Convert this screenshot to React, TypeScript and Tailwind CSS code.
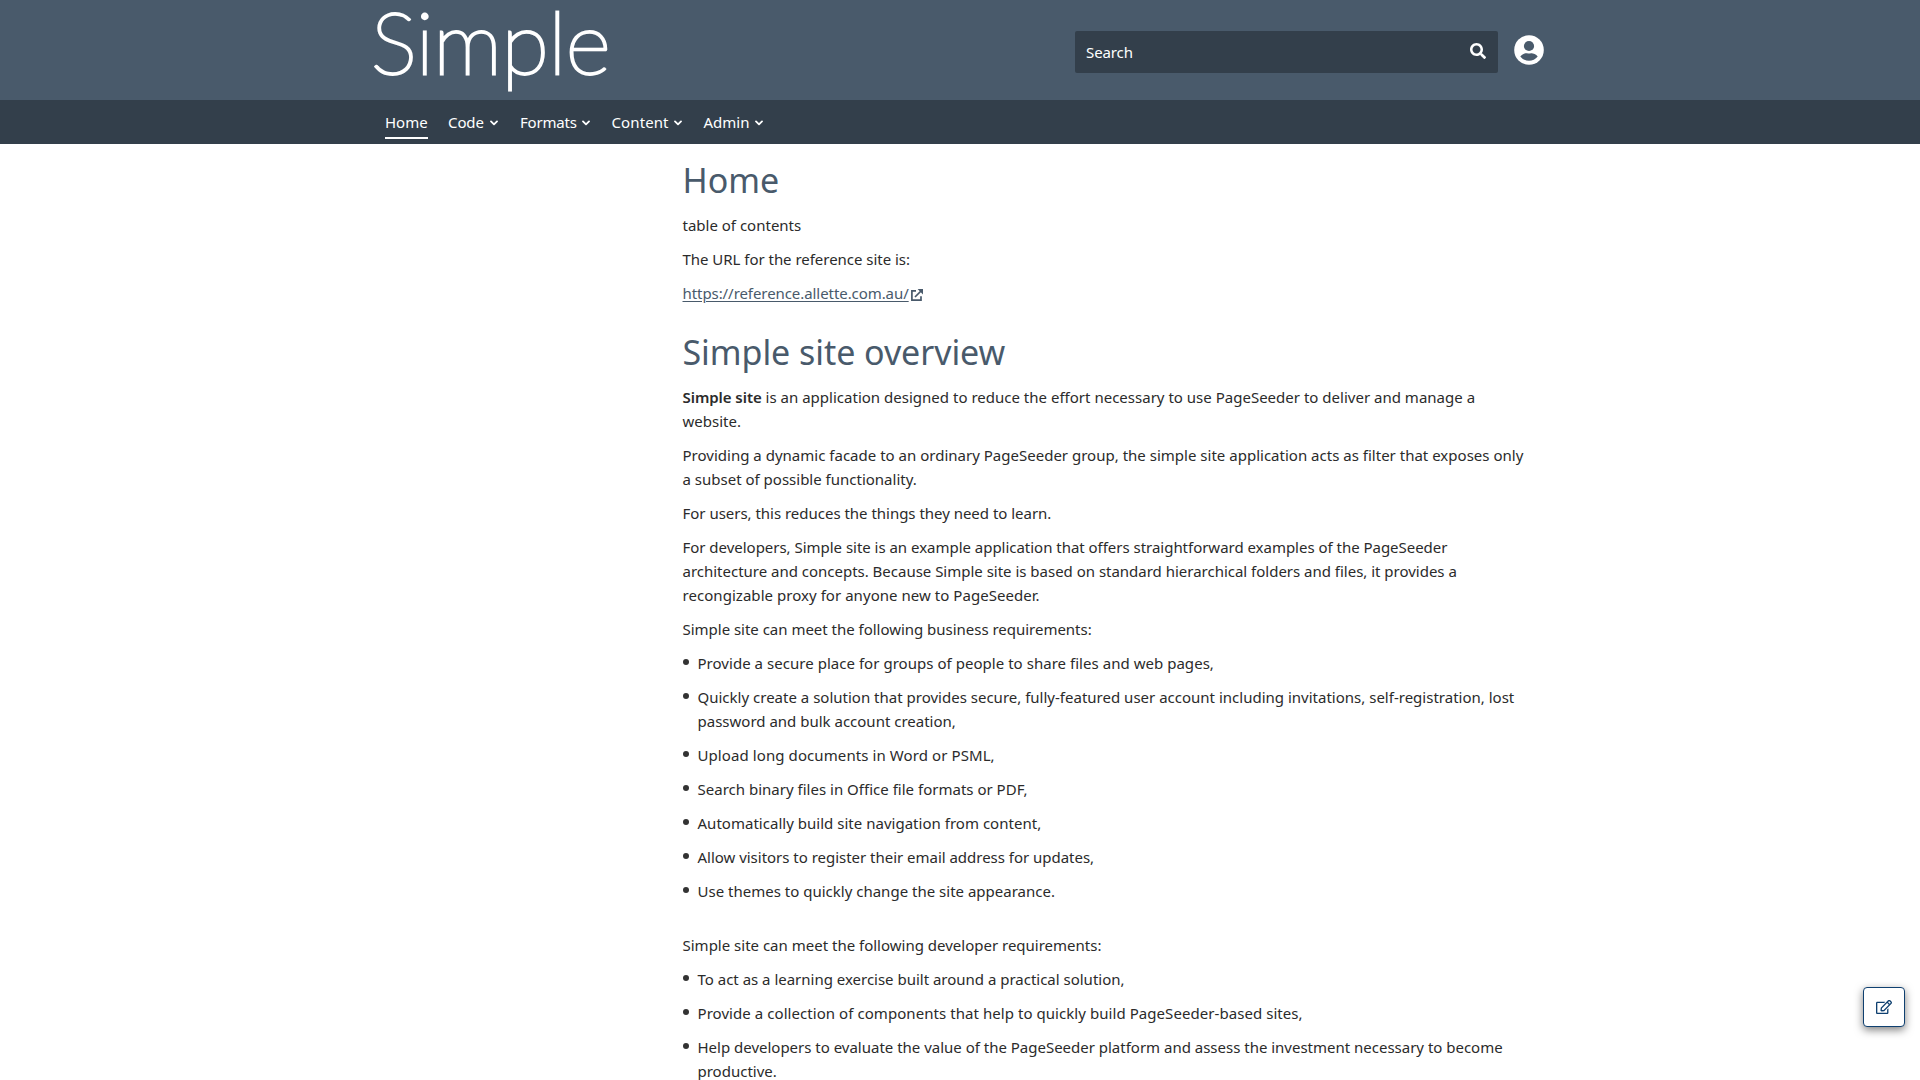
import { FaSearch, FaRegEdit } from "react-icons/fa";

const navItems = [
  { label: "Code", width: "w-[72px]", text: "w-[37px] tracking-[-0.1px]" },
  { label: "Formats", width: "w-[91.5px]", text: "w-[56.5px] tracking-[-0.2px]" },
  { label: "Content", width: "w-[92px]", text: "w-[57px] tracking-[0.1px]" },
  { label: "Admin", width: "w-[60px]", text: "w-[46.5px]" },
];

type Line = [text: string, tracking?: string];

const businessItems: Line[][] = [
  [["Provide a secure place for groups of people to share files and web pages,", "tracking-[0.037px]"]],
  [
    ["Quickly create a solution that provides secure, fully-featured user account including invitations, self-registration, lost", "tracking-[0.005px]"],
    ["password and bulk account creation,"],
  ],
  [["Upload long documents in Word or PSML,", "tracking-[0.09px]"]],
  [["Search binary files in Office file formats or PDF,", "tracking-[0.01px]"]],
  [["Automatically build site navigation from content,", "tracking-[0.02px]"]],
  [["Allow visitors to register their email address for updates,", "tracking-[-0.02px]"]],
  [["Use themes to quickly change the site appearance.", "tracking-[0.005px]"]],
];

const developerItems: Line[][] = [
  [["To act as a learning exercise built around a practical solution,", "tracking-[-0.01px]"]],
  [["Provide a collection of components that help to quickly build PageSeeder-based sites,", "tracking-[0.06px]"]],
  [
    ["Help developers to evaluate the value of the PageSeeder platform and assess the investment necessary to become", "tracking-[-0.008px]"],
    ["productive."],
  ],
];

function Chevron() {
  return (
    <svg className="mt-[3px] h-[8px] w-[8px] shrink-0" viewBox="0 0 8 8" fill="none" stroke="currentColor" strokeWidth="1.8">
      <path d="M1 2.4 L4 5.4 L7 2.4" strokeLinecap="round" strokeLinejoin="round" />
    </svg>
  );
}

function Lines({ lines }: { lines: Line[] }) {
  return (
    <>
      {lines.map(([text, tracking]) => (
        <span key={text} className={`block whitespace-nowrap ${tracking ?? ""}`}>
          {text}
        </span>
      ))}
    </>
  );
}

function Paragraph({ lines }: { lines: Line[] }) {
  return (
    <p className="mb-[10px]">
      <Lines lines={lines} />
    </p>
  );
}

function BulletList({ items }: { items: Line[][] }) {
  return (
    <ul>
      {items.map((lines) => (
        <li key={lines[0][0]} className="mb-[10px] flex">
          <span className="mt-2 mr-[8.5px] ml-[0.5px] h-[6px] w-[6px] shrink-0 rounded-full bg-[#333]" />
          <div>
            <Lines lines={lines} />
          </div>
        </li>
      ))}
    </ul>
  );
}

export default function App() {
  return (
    <div className="h-[1080px] w-[1920px] overflow-hidden bg-white font-['Noto_Sans','Open_Sans',sans-serif] text-[15px] leading-6 text-[#2b2b2b]">
      <header className="flex h-[100px] items-start bg-[#495a6b] pl-[371px]">
        <div className="h-[100px] w-[704px] font-['Lato',sans-serif] text-[87px] leading-[81px] font-thin tracking-[-0.5px] text-white [-webkit-text-stroke:2.8px_white]">
          Simple
        </div>
        <div className="mt-[31px] flex h-[42px] w-[423px] items-center justify-between rounded-[2px] bg-[#333f4b] pr-[12px] pl-[11px] text-white">
          <span className="tracking-[-0.1px]">Search</span>
          <FaSearch className="mt-[-2px] h-4 w-4" />
        </div>
        <svg className="mt-[35px] ml-4 h-[30px] w-[30px]" viewBox="0 0 30 30">
          <circle cx="15" cy="15" r="14.8" fill="#fff" />
          <circle cx="15" cy="11" r="5.1" fill="#495a6b" />
          <path d="M6.3 21.5 C8 18.8 11.5 18 13 18.2 Q15 19 17 18.2 C18.5 18 22 18.8 23.7 21.5 C19.5 27.2 10.5 27.2 6.3 21.5Z" fill="#495a6b" />
        </svg>
      </header>

      <nav className="flex h-[44px] bg-[#333f4b] pl-[385px] text-white">
        <a className="mr-5 h-[39px] w-[43px] border-b-2 border-white pt-[10px] leading-6">Home</a>
        {navItems.map((item) => (
          <a key={item.label} className={`flex h-[44px] items-center pb-[1px] ${item.width}`}>
            <span className={`mr-[5px] whitespace-nowrap ${item.text}`}>{item.label}</span>
            <Chevron />
          </a>
        ))}
      </nav>

      <main className="pt-[14px] pl-[682.5px]">
        <h1 className="mb-[11px] text-[34px] leading-[44px] text-[#495a6b]">Home</h1>
        <Paragraph lines={[["table of contents"]]} />
        <Paragraph lines={[["The URL for the reference site is:", "tracking-[-0.03px]"]]} />
        <p className="flex text-[#495a6b]">
          <a className="tracking-[-0.07px] underline underline-offset-2">https://reference.allette.com.au/</a>
          <svg className="mt-2 ml-[2px] h-3 w-3" viewBox="0 0 12 12" fill="none" stroke="currentColor" strokeWidth="1.7">
            <path d="M5 1.8 H0.9 V11.1 H10 V7.2 M4 8 L10 2" />
            <path d="M6.6 0 H12 V5.4 Z" fill="currentColor" stroke="none" />
          </svg>
        </p>

        <h1 className="mt-[25px] mb-[11px] text-[34px] leading-[44px] tracking-[-0.06px] text-[#495a6b]">Simple site overview</h1>
        <p className="mb-[10px]">
          <span className="block tracking-[0.01px] whitespace-nowrap">
            <b className="font-semibold tracking-[-0.05px]">Simple site</b> is an application designed to reduce the effort necessary to use PageSeeder to deliver and manage a
          </span>
          website.
        </p>
        <Paragraph
          lines={[
            ["Providing a dynamic facade to an ordinary PageSeeder group, the simple site application acts as filter that exposes only", "tracking-[0.01px]"],
            ["a subset of possible functionality."],
          ]}
        />
        <Paragraph lines={[["For users, this reduces the things they need to learn.", "tracking-[-0.02px]"]]} />
        <Paragraph
          lines={[
            ["For developers, Simple site is an example application that offers straightforward examples of the PageSeeder", "tracking-[-0.024px]"],
            ["architecture and concepts. Because Simple site is based on standard hierarchical folders and files, it provides a", "tracking-[-0.012px]"],
            ["recongizable proxy for anyone new to PageSeeder.", "tracking-[0.045px]"],
          ]}
        />
        <Paragraph lines={[["Simple site can meet the following business requirements:", "tracking-[-0.02px]"]]} />
        <BulletList items={businessItems} />
        <div className="h-5" />
        <Paragraph lines={[["Simple site can meet the following developer requirements:"]]} />
        <BulletList items={developerItems} />
      </main>

      <button className="fixed top-[987px] left-[1863px] flex h-[40px] w-[42px] items-center justify-center rounded-[4px] border border-[#0f4070] bg-white text-[#0f4070] shadow-[0_3px_9px_rgba(0,0,0,0.5)]">
        <FaRegEdit className="h-4 w-4" />
      </button>
    </div>
  );
}
